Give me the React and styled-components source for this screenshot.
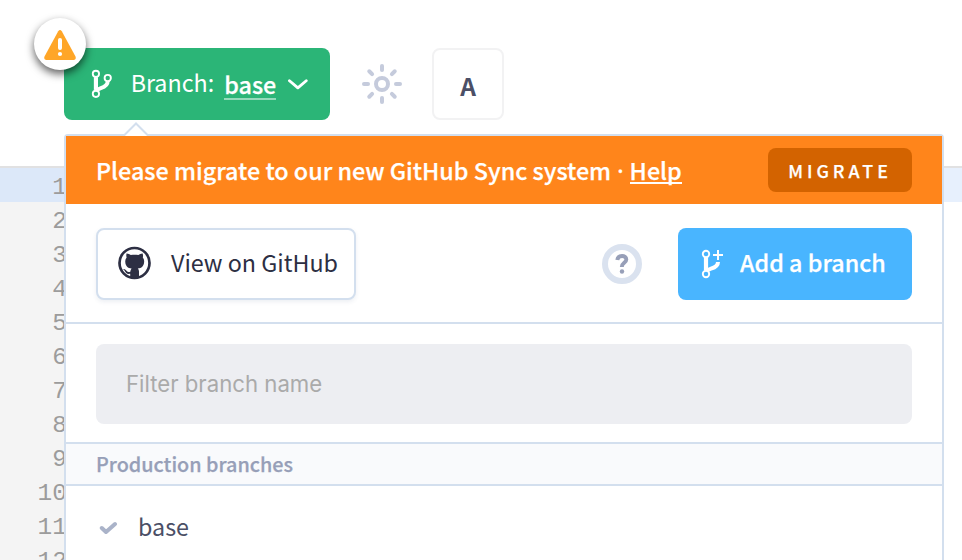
import React from "react";
import styled, { createGlobalStyle } from "styled-components";

const sans = '"Noto Sans CJK SC", "Noto Sans", sans-serif';

const GlobalStyle = createGlobalStyle`
  * { box-sizing: border-box; }
  body { margin: 0; background: #fff; overflow: hidden; font-family: ${sans}; }
  button, input { font: inherit; border: 0; margin: 0; padding: 0; }
`;

const Page = styled.div`
  position: relative;
  width: 962px;
  height: 560px;
  overflow: hidden;
  display: flex;
  flex-direction: column;
`;

const Toolbar = styled.header`
  display: flex;
  align-items: center;
  height: 168px;
  flex: none;
  padding: 2px 64px 0;
  border-bottom: 2px solid #e1e1e2;
`;

const ToolbarRow = styled.div`
  display: flex;
  align-items: center;
  height: 72px;
`;

const Label = styled.span`
  display: block;
  white-space: nowrap;
  font-size: ${(p) => p.$size}px;
  font-weight: ${(p) => p.$weight || 400};
  letter-spacing: ${(p) => p.$spacing || 0}px;
  line-height: 30px;
  padding-bottom: ${(p) => p.$lift || 0}px;
  color: ${(p) => p.$color || "#fff"};
  -webkit-text-stroke: ${(p) => (p.$weight === 500 ? "0.25px" : "0")} currentColor;
`;

const BranchButton = styled.button`
  position: relative;
  display: flex;
  align-items: center;
  width: 266px;
  height: 72px;
  padding: 0 22px 0 26px;
  border-radius: 8px;
  background: #2bb577;
  color: #fff;

  > svg:first-of-type { margin-right: 17px; }
`;

const CurrentBranch = styled(Label)`
  margin: 2px 12px 0 10px;
  line-height: 28px;
  border-bottom: 2px solid rgba(255, 255, 255, 0.5);
`;

const WarningBadge = styled.span`
  position: absolute;
  left: -30px;
  top: -30px;
  display: grid;
  place-items: center;
  width: 52px;
  height: 52px;
  padding-top: 2px;
  border-radius: 50%;
  background: #fff;
  box-shadow: 0 4px 8px rgba(0, 0, 0, 0.62);
`;

const SettingsButton = styled.button`
  display: grid;
  place-items: center;
  width: 40px;
  height: 40px;
  margin: 0 30px 0 32px;
  background: none;
`;

const LetterButton = styled.button`
  display: grid;
  place-items: center;
  width: 72px;
  height: 72px;
  padding-top: 4px;
  border: 2px solid #f2f2f3;
  border-radius: 8px;
  background: #fff;
`;

const Editor = styled.main`
  display: flex;
  flex: 1;
  min-height: 0;
  background: linear-gradient(#e7f0fd 34px, #fff 34px);
`;

const Gutter = styled.ol`
  width: 68px;
  height: 100%;
  margin: 0;
  padding: 0;
  list-style: none;
  background: #f4f4f4;
  overflow: hidden;
`;

const LineNumber = styled.li`
  height: 34px;
  line-height: 39px;
  padding-right: 1px;
  text-align: right;
  font-family: "Liberation Mono", monospace;
  font-size: 24.5px;
  color: #9c9c9c;
  background: ${(p) => (p.$active ? "#dce8f9" : "transparent")};
`;

const Popover = styled.section`
  position: absolute;
  left: 64px;
  top: 134px;
  width: 880px;
  height: 440px;
  border: 2px solid #d3dfee;
  border-radius: 4px;
  background: #fff;
`;

const Caret = styled.svg`
  position: absolute;
  left: 56px;
  top: -15px;
`;

const Banner = styled.div`
  display: flex;
  align-items: center;
  justify-content: space-between;
  height: 68px;
  padding: 0 30px;
  background: #ff851b;
`;

const Separator = styled.span`
  font-family: "Noto Sans", sans-serif;
`;

const HelpLink = styled.a`
  display: inline-block;
  line-height: 24px;
  border-bottom: 2px solid #fff;
`;

const MigrateButton = styled.button`
  display: grid;
  place-items: center;
  width: 144px;
  height: 44px;
  border-radius: 8px;
  background: #d36300;
`;

const Actions = styled.div`
  display: flex;
  align-items: center;
  height: 120px;
  padding: 2px 30px 0;
  border-bottom: 2px solid #d3dfee;
`;

const GithubButton = styled.button`
  display: flex;
  align-items: center;
  gap: 19px;
  width: 260px;
  height: 72px;
  padding: 0 0 0 20px;
  border: 2px solid #d3dfee;
  border-radius: 8px;
  background: #fff;
  box-shadow: 0 2px 4px rgba(60, 80, 120, 0.09);

  > svg { margin-bottom: 3px; }
`;

const HelpButton = styled.button`
  display: grid;
  place-items: center;
  width: 40px;
  height: 40px;
  margin: 0 36px 0 auto;
  border: 6px solid #dae2ef;
  border-radius: 50%;
  background: #fff;
`;

const AddButton = styled.button`
  display: flex;
  align-items: center;
  gap: 16px;
  width: 234px;
  height: 72px;
  padding-left: 22px;
  border-radius: 8px;
  background: #49b5ff;
`;

const FilterRow = styled.div`
  height: 118px;
  padding: 20px 30px 0;
`;

const FilterInput = styled.input`
  display: block;
  width: 100%;
  height: 80px;
  padding: 0 30px 2px;
  border-radius: 8px;
  background: #edeef2;
  outline: none;
  font-family: Inter, sans-serif;
  font-size: 22.2px;
  font-weight: 400;

  &::placeholder { color: #aaa; opacity: 1; }
`;

const SectionTitle = styled.h2`
  display: flex;
  align-items: center;
  height: 44px;
  margin: 0;
  padding: 0 30px;
  border: solid #d3dfee;
  border-width: 2px 0;
  background: #f9fafc;
`;

const BranchRow = styled.div`
  display: flex;
  align-items: center;
  gap: 20px;
  height: 84px;
  padding: 0 33px;
`;

const WarningIcon = () => (
  <svg width="32" height="30" viewBox="0 0 32 30">
    <path d="M14.2 1.2Q16-1 17.8 1.2L31.5 26.5Q32.5 29.5 30 30H2Q-.5 29.5.5 26.5Z" fill="#ffa628" />
    <path d="M16 10v8" stroke="#fff" strokeWidth="4" strokeLinecap="round" />
    <circle cx="16" cy="24" r="2.1" fill="#fff" />
  </svg>
);

const BranchIcon = () => (
  <svg width="24" height="30" viewBox="0 0 24 30" fill="none" stroke="#fff">
    <path d="M6 8v13" strokeWidth="4.2" />
    <path d="M18 12c0 5-4 6.300-7 7.200-2 .6-3.500 1.300-4.500 2.800" strokeWidth="4" />
    <circle cx="6" cy="4.700" r="3.200" strokeWidth="1.900" fill="#2bb577" />
    <circle cx="18" cy="9" r="3.200" strokeWidth="1.900" fill="#2bb577" />
    <circle cx="6" cy="25" r="3.200" strokeWidth="1.900" fill="#2bb577" />
  </svg>
);

const AddBranchIcon = () => (
  <svg width="24" height="30" viewBox="0 0 24 30" fill="none" stroke="#fff">
    <path d="M6 8v13" strokeWidth="4.2" />
    <path d="M18 13c0 4-4 5.800-7 6.700-2 .6-3.500 1.300-4.500 2.800" strokeWidth="4" />
    <circle cx="6" cy="5" r="3.200" strokeWidth="1.900" fill="#49b5ff" />
    <circle cx="6" cy="25" r="3.200" strokeWidth="1.900" fill="#49b5ff" />
    <path d="M18 1v10M13 6h10" strokeWidth="2" />
  </svg>
);

const ChevronIcon = () => (
  <svg width="20" height="12" viewBox="0 0 20 12" fill="none">
    <path d="M1.500 2.700 10 9.900l8.500-7.200" stroke="#fff" strokeWidth="2.900" strokeLinecap="round" strokeLinejoin="round" />
  </svg>
);

const rays = [0, 45, 90, 135, 180, 225, 270, 315];

const SunIcon = () => (
  <svg width="40" height="40" viewBox="-20 -20 40 40" fill="none" stroke="#c5cbdc" strokeWidth="4" strokeLinecap="round">
    <circle r="6" />
    {rays.map((angle) => (
      <path key={angle} d="M0-18v4" transform={`rotate(${angle})`} />
    ))}
  </svg>
);

const GithubIcon = () => (
  <svg width="34" height="34" viewBox="0 0 34 34">
    <circle cx="16.500" cy="17" r="15" fill="none" stroke="#2d2f43" strokeWidth="2.700" />
    <path
      fill="#2d2f43"
      d="M8.600 7.500c1.500-.1 3 .7 4.200 1.500 2.500-.5 5.100-.5 7.600 0 1.200-.8 2.700-1.600 4.200-1.500.6 1.500.5 2.800.2 3.900 1.200 1.400 1.500 3 1.300 4.800-.3 4-2.500 5.800-6.300 6.300.8.800 1.200 1.800 1.200 3V32h-8.800v-4.200c-3.600.5-4.500-1.200-5.400-2.800-.4-.8-.9-1.300-1.800-2 2-.3 2.800.8 3.700 2 .8 1.100 2 1.300 3.600.8.100-1.400.5-2.500 1.300-3.300-3.800-.5-6-2.300-6.300-6.300-.2-1.800.2-3.400 1.300-4.800-.4-1.100-.4-2.400 0-3.900z"
    />
  </svg>
);

const QuestionIcon = () => (
  <svg width="14" height="20" viewBox="0 0 14 20" fill="none">
    <path d="M2.300 6C3 .6 11.300.9 11.300 5.400c0 3.600-4.500 3.300-4.500 7.600" stroke="#979fb8" strokeWidth="3.900" />
    <circle cx="7" cy="17.500" r="2.200" fill="#979fb8" />
  </svg>
);

const CheckIcon = () => (
  <svg width="19" height="14" viewBox="0 0 19 14" fill="none">
    <path d="M2.800 7 7 11l9-8" stroke="#aab3c9" strokeWidth="4" strokeLinecap="round" strokeLinejoin="round" />
  </svg>
);

const lineNumbers = Array.from({ length: 12 }, (_, i) => i + 1);

export default function App() {
  return (
    <Page>
      <GlobalStyle />
      <Toolbar>
        <ToolbarRow>
          <BranchButton>
            <WarningBadge><WarningIcon /></WarningBadge>
            <BranchIcon />
            <Label $size={23.3} $lift={5}>Branch:</Label>
            <CurrentBranch $size={23.3} $weight={500}>base</CurrentBranch>
            <ChevronIcon />
          </BranchButton>
          <SettingsButton><SunIcon /></SettingsButton>
          <LetterButton><Label $size={24.5} $weight={700} $color="#4b4f66">A</Label></LetterButton>
        </ToolbarRow>
      </Toolbar>
      <Editor>
        <Gutter>
          {lineNumbers.map((n) => <LineNumber key={n} $active={n === 1}>{n}</LineNumber>)}
        </Gutter>
      </Editor>
      <Popover>
        <Caret width="28" height="15" viewBox="0 0 28 15">
          <path d="M1.500 15 14 2.500 26.500 15" fill="#fff" stroke="#d3dfee" strokeWidth="2" />
        </Caret>
        <Banner>
          <Label $size={23.33} $weight={500}>
            Please migrate to our new GitHub Sync system<Separator> · </Separator><HelpLink>Help</HelpLink>
          </Label>
          <MigrateButton><Label $size={17.8} $weight={500} $spacing={4}>MIGRATE</Label></MigrateButton>
        </Banner>
        <Actions>
          <GithubButton>
            <GithubIcon />
            <Label $size={23.3} $lift={5} $color="#2d2f43">View on GitHub</Label>
          </GithubButton>
          <HelpButton><QuestionIcon /></HelpButton>
          <AddButton>
            <AddBranchIcon />
            <Label $size={23.3} $lift={5} $weight={500}>Add a branch</Label>
          </AddButton>
        </Actions>
        <FilterRow><FilterInput placeholder="Filter branch name" /></FilterRow>
        <SectionTitle><Label $size={19.8} $weight={500} $color="#979fb8">Production branches</Label></SectionTitle>
        <BranchRow>
          <CheckIcon />
          <Label $size={23.3} $lift={5} $color="#4b4f66">base</Label>
        </BranchRow>
      </Popover>
    </Page>
  );
}
